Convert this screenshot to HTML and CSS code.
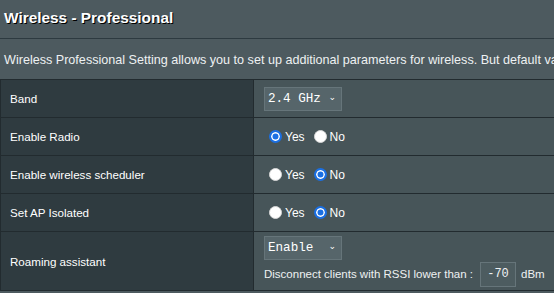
FILE: index.html
```html
<!DOCTYPE html>
<html lang="en">
<head>
  <meta charset="UTF-8" />
  <title>Wireless - Professional</title>
  <link rel="stylesheet" href="styles.css">
</head>
<body>

  <div class="page">
    <div class="page-title">Wireless - Professional</div>
    <div class="divider"></div>
    <div class="desc">Wireless Professional Setting allows you to set up additional parameters for wireless. But default values are recommended.</div>

    <table class="form-table">
      <tr>
        <th>Band</th>
        <td>
          <div class="select">2.4 GHz <span class="caret">&#8964;</span></div>
        </td>
      </tr>
      <tr>
        <th>Enable Radio</th>
        <td>
          <div class="radios">
            <label class="radio"><input type="radio" name="radio" checked> Yes</label>
            <label class="radio"><input type="radio" name="radio"> No</label>
          </div>
        </td>
      </tr>
      <tr>
        <th>Enable wireless scheduler</th>
        <td>
          <div class="radios">
            <label class="radio"><input type="radio" name="sched"> Yes</label>
            <label class="radio"><input type="radio" name="sched" checked> No</label>
          </div>
        </td>
      </tr>
      <tr>
        <th>Set AP Isolated</th>
        <td>
          <div class="radios">
            <label class="radio"><input type="radio" name="iso"> Yes</label>
            <label class="radio"><input type="radio" name="iso" checked> No</label>
          </div>
        </td>
      </tr>
      <tr class="tall">
        <th>Roaming assistant</th>
        <td>
          <div class="select">Enable <span class="caret">&#8964;</span></div>
          <div class="rssi">
            Disconnect clients with RSSI lower than :
            <span class="num-box">-70</span>
            dBm
          </div>
        </td>
      </tr>
    </table>
  </div>

</body>
</html>
```

FILE: styles.css
```css
html, body {
  margin: 0;
  padding: 0;
  background: #4d5a5f;
  overflow: hidden;
}

body {
  font-family: "Liberation Sans", Arial, sans-serif;
  color: #fff;
}

.page {
  width: 780px;
}

.page-title {
  font-size: 15.4px;
  font-weight: bold;
  padding: 9px 0 0 4px;
  height: 29px;
  text-shadow: 1px 1px 0 #000;
}

.divider {
  height: 1px;
  background: #2d3a40;
}

.desc {
  font-size: 12.6px;
  color: #eef1f2;
  white-space: nowrap;
  padding: 14px 0 0 4px;
  height: 26px;
}

.form-table {
  border-collapse: collapse;
  width: 100%;
  font-size: 11.6px;
}

.form-table th,
.form-table td {
  border: 1px solid #222b2f;
  height: 37px;
  padding: 0;
}

.form-table th {
  width: 243px;
  background: #2f3b40;
  text-align: left;
  font-weight: normal;
  padding-left: 9px;
}

.form-table td {
  background: #475559;
  padding-left: 10px;
}

.form-table tr.tall th,
.form-table tr.tall td {
  height: 58px;
}

.select {
  display: flex;
  align-items: center;
  box-sizing: border-box;
  width: 78px;
  height: 24px;
  padding-left: 3px;
  white-space: nowrap;
  background: #56656a;
  border: 1px solid #66757a;
  font-family: "Liberation Mono", monospace;
  font-size: 12.6px;
  color: #fff;
}

.caret {
  font-family: "DejaVu Sans", sans-serif;
  font-size: 9px;
  margin-left: auto;
  margin-right: 5px;
  margin-top: -3px;
}

.radios {
  display: flex;
  gap: 9px;
  padding-left: 5px;
}

.radio {
  display: inline-flex;
  align-items: center;
  font-size: 12px;
}

.radio input {
  appearance: none;
  width: 13px;
  height: 13px;
  margin: 0 3px 0 0;
  border-radius: 50%;
  background: #fff;
  border: 1px solid #d8d8d8;
}

.radio input:checked {
  border: 2px solid #1a6fe3;
  background: #1a6fe3;
  box-shadow: inset 0 0 0 1.5px #fff;
}

.rssi {
  display: flex;
  align-items: center;
  margin-top: 2px;
  font-size: 11.5px;
  color: #eef1f2;
}

.num-box {
  display: inline-block;
  box-sizing: border-box;
  width: 36px;
  height: 25px;
  line-height: 23px;
  margin: 0 5px 0 7px;
  text-align: center;
  border: 1px solid #66757a;
  background: #4d5c60;
  font-family: "Liberation Mono", monospace;
  font-size: 12px;
}
```
